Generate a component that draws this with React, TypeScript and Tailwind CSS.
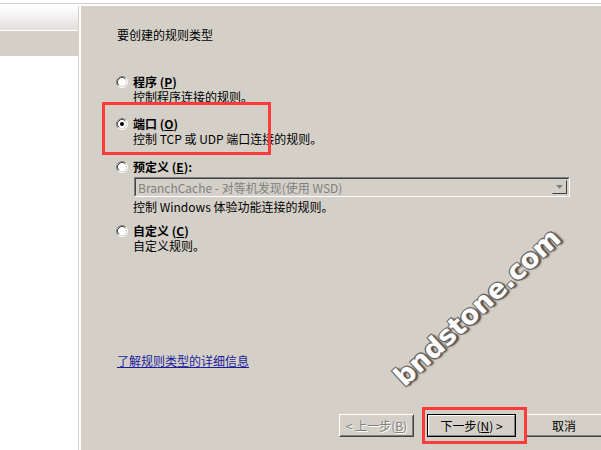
function Radio({ checked }: { checked?: boolean }) {
  return (
    <svg width="12" height="12" viewBox="0 0 12 12" className="shrink-0">
      <circle cx="6" cy="6" r="5" fill="#ffffff" />
      <path d="M9.89 2.11 A5.5 5.5 0 0 0 2.11 9.89" fill="none" stroke="#808080" strokeWidth="1" />
      <path d="M2.11 9.89 A5.5 5.5 0 0 0 9.89 2.11" fill="none" stroke="#ffffff" strokeWidth="1" />
      <path d="M9.18 2.82 A4.5 4.5 0 0 0 2.82 9.18" fill="none" stroke="#404040" strokeWidth="1" />
      <path d="M2.82 9.18 A4.5 4.5 0 0 0 9.18 2.82" fill="none" stroke="#d4d0c8" strokeWidth="1" />
      {checked && <circle cx="6" cy="6" r="2" fill="#000000" />}
    </svg>
  );
}

function Option({ label, keyChar, suffix, checked }: { label: string; keyChar: string; suffix?: string; checked?: boolean }) {
  return (
    <div className="flex h-[15px] items-center gap-[5px] leading-[15px]">
      <Radio checked={checked} />
      <span className="font-bold">
        {label} (<span className="underline">{keyChar}</span>){suffix}
      </span>
    </div>
  );
}

export default function App() {
  return (
    <div className="relative h-[450px] w-[601px] overflow-hidden bg-white font-['Noto_Sans_CJK_SC',sans-serif] text-[12px] text-black">
      <div className="mt-[3px] h-px bg-[#d4d0c8]" />
      <div className="mt-[2px] flex h-[444px]">
        {/* tree pane */}
        <div className="w-[78px] shrink-0 pt-px">
          <div className="h-[23px] bg-gradient-to-b from-white to-[#e2dede]" />
          <div className="mt-px h-[25px] bg-[#d4d0c8]" />
        </div>
        <div className="w-px shrink-0 bg-[#d4d0c8]" />
        <div className="w-[2px] shrink-0" />

        {/* wizard page */}
        <div className="flex min-w-0 flex-1 flex-col overflow-hidden bg-[#d4d0c8] pl-[35px] leading-[15px]">
          <div className="mt-[21px] pl-px">要创建的规则类型</div>

          <div className="mt-[32px]">
            <Option label="程序" keyChar="P" />
          </div>
          <div className="pl-[17px]">控制程序连接的规则。</div>

          <div className="mt-[12px]">
            <Option label="端口" keyChar="O" checked />
          </div>
          <div className="pl-[17px]">控制 TCP 或 UDP 端口连接的规则。</div>

          <div className="mt-[13px]">
            <Option label="预定义" keyChar="E" suffix=":" />
          </div>
          <div className="ml-[18px] mt-[3px] flex h-[20px] w-[436px] shrink-0 border border-t-[#808080] border-l-[#808080] border-b-white border-r-white">
            <div className="flex flex-1 items-center border border-t-[#404040] border-l-[#404040] border-b-[#d4d0c8] border-r-[#d4d0c8] pl-[2px] pr-px">
              <span className="flex-1 whitespace-nowrap text-[#808080]">BranchCache - 对等机发现(使用 WSD)</span>
              <div className="flex h-[14px] w-[15px] items-center justify-center border border-t-[#d4d0c8] border-l-[#d4d0c8] border-b-[#404040] border-r-[#404040]">
                <svg width="7" height="5" viewBox="0 0 7 5">
                  <path d="M1 1 L6 1 L3.5 4 Z" fill="#ffffff" />
                  <path d="M0 0 L7 0 L3.5 4 Z" fill="#808080" />
                </svg>
              </div>
            </div>
          </div>
          <div className="mt-[2px] pl-[17px]">控制 Windows 体验功能连接的规则。</div>

          <div className="mt-[9px]">
            <Option label="自定义" keyChar="C" />
          </div>
          <div className="pl-[17px]">自定义规则。</div>

          <div className="mt-[100px] pl-px">
            <span className="text-[#1c1c9c] underline">了解规则类型的详细信息</span>
          </div>

          <div className="ml-[223px] mt-[46px] flex">
            <div className="h-[23px] w-[75px] shrink-0 border border-t-white border-l-white border-b-[#404040] border-r-[#404040]">
              <div className="flex h-full items-center justify-center border border-t-[#d4d0c8] border-l-[#d4d0c8] border-b-[#808080] border-r-[#808080] text-[#808080] [text-shadow:1px_1px_0_#ffffff]">
                &lt; 上一步(<span className="underline">B</span>)
              </div>
            </div>
            <div className="ml-[13px] h-[23px] w-[89px] shrink-0 border border-black">
              <div className="flex h-full items-center justify-center border border-t-white border-l-white border-b-[#808080] border-r-[#808080]">
                下一步(<span className="underline">N</span>) &gt;
              </div>
            </div>
            <div className="ml-[8px] h-[23px] w-[80px] shrink-0 border border-t-white border-l-white border-b-[#404040] border-r-[#404040]">
              <div className="flex h-full items-center justify-center border border-t-[#d4d0c8] border-l-[#d4d0c8] border-b-[#808080] border-r-[#808080]">
                取消
              </div>
            </div>
          </div>
        </div>
      </div>

      {/* annotations */}
      <div className="absolute left-[102px] top-[102px] h-[53px] w-[169px] border-[3px] border-[#ff3b3b]" />
      <div className="absolute left-[422px] top-[407px] h-[37px] w-[105px] border-[3px] border-[#ff3b3b]" />

      <div className="absolute left-[477px] top-[307px] -translate-x-1/2 -translate-y-1/2 rotate-[-43deg] whitespace-nowrap font-['DejaVu_Sans',sans-serif] text-[27px] font-bold leading-none text-white [text-shadow:-1px_-1px_0_#666,1px_-1px_0_#666,-1px_1px_0_#666,1px_1px_0_#666,2px_2px_2px_#333]">
        bndstone.com
      </div>
    </div>
  );
}
